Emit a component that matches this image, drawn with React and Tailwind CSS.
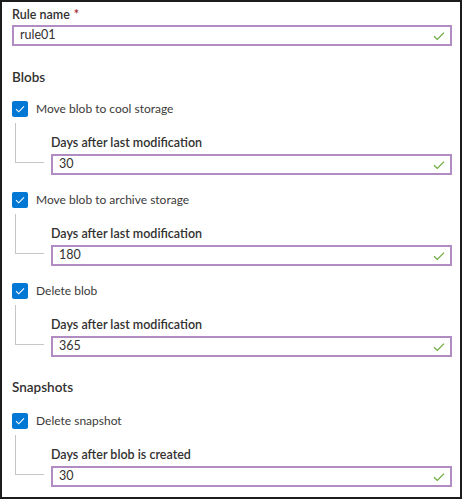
import React from 'react';

const font = { fontFamily: 'Lato, "Noto Sans", Arial, sans-serif' };

function Check() {
  return (
    <svg width="12" height="10" viewBox="0 0 12 10" className="shrink-0">
      <path d="M1 5.2 L4.3 8.4 L11 1.6" fill="none" stroke="#6aaa3a" strokeWidth="1.2" />
    </svg>
  );
}

function TextInput({ value }) {
  return (
    <div className="flex items-center h-[21px] border-2 border-[#b08cc3] bg-white pl-[6px] pr-[5px]">
      <span className="flex-1 text-[12.5px] leading-none text-[#323130]">{value}</span>
      <Check />
    </div>
  );
}

function Checkbox({ label }) {
  return (
    <div className="flex items-center h-5 gap-2">
      <span className="flex items-center justify-center w-4 h-4 rounded-[2px] bg-[#0078d4]">
        <svg width="10" height="8" viewBox="0 0 10 8">
          <path d="M1 4.2 L3.7 6.8 L9 1.4" fill="none" stroke="#fff" strokeWidth="1.1" />
        </svg>
      </span>
      <span className="text-[12px] text-[#3b3a39]">{label}</span>
    </div>
  );
}

function Rule({ label, field, value, className = '' }) {
  return (
    <div className={className}>
      <Checkbox label={label} />
      <div className="flex">
        <div className="w-[39px] shrink-0">
          <div className="ml-[3px] mt-[4px] w-[29px] h-[40px] border-l border-b border-[#c8c6c4]" />
        </div>
        <div className="flex-1 pt-[15px]">
          <div className="h-[18px] mb-[2px] flex items-center text-[12.5px] font-semibold text-[#323130]">{field}</div>
          <TextInput value={value} />
        </div>
      </div>
    </div>
  );
}

export default function App() {
  return (
    <div style={font} className="w-[462px] h-[499px] border-2 border-[#1c1c1c] bg-white pl-[10px] pr-[8px] pt-[4px] overflow-hidden">
      <div className="h-[18px] mb-[1px] flex items-center text-[12.5px] font-semibold text-[#323130]">
        Rule name <span className="ml-1 text-[#a4262c]">*</span>
      </div>
      <TextInput value="rule01" />

      <div className="mt-[21px] h-5 flex items-center text-[13.5px] font-semibold text-[#323130]">Blobs</div>
      <Rule className="mt-[12px]" label="Move blob to cool storage" field="Days after last modification" value="30" />
      <Rule className="mt-[15px]" label="Move blob to archive storage" field="Days after last modification" value="180" />
      <Rule className="mt-[15px]" label="Delete blob" field="Days after last modification" value="365" />

      <div className="mt-[20px] h-5 flex items-center text-[13.5px] font-semibold text-[#323130]">Snapshots</div>
      <Rule className="mt-[14px]" label="Delete snapshot" field="Days after blob is created" value="30" />
    </div>
  );
}
